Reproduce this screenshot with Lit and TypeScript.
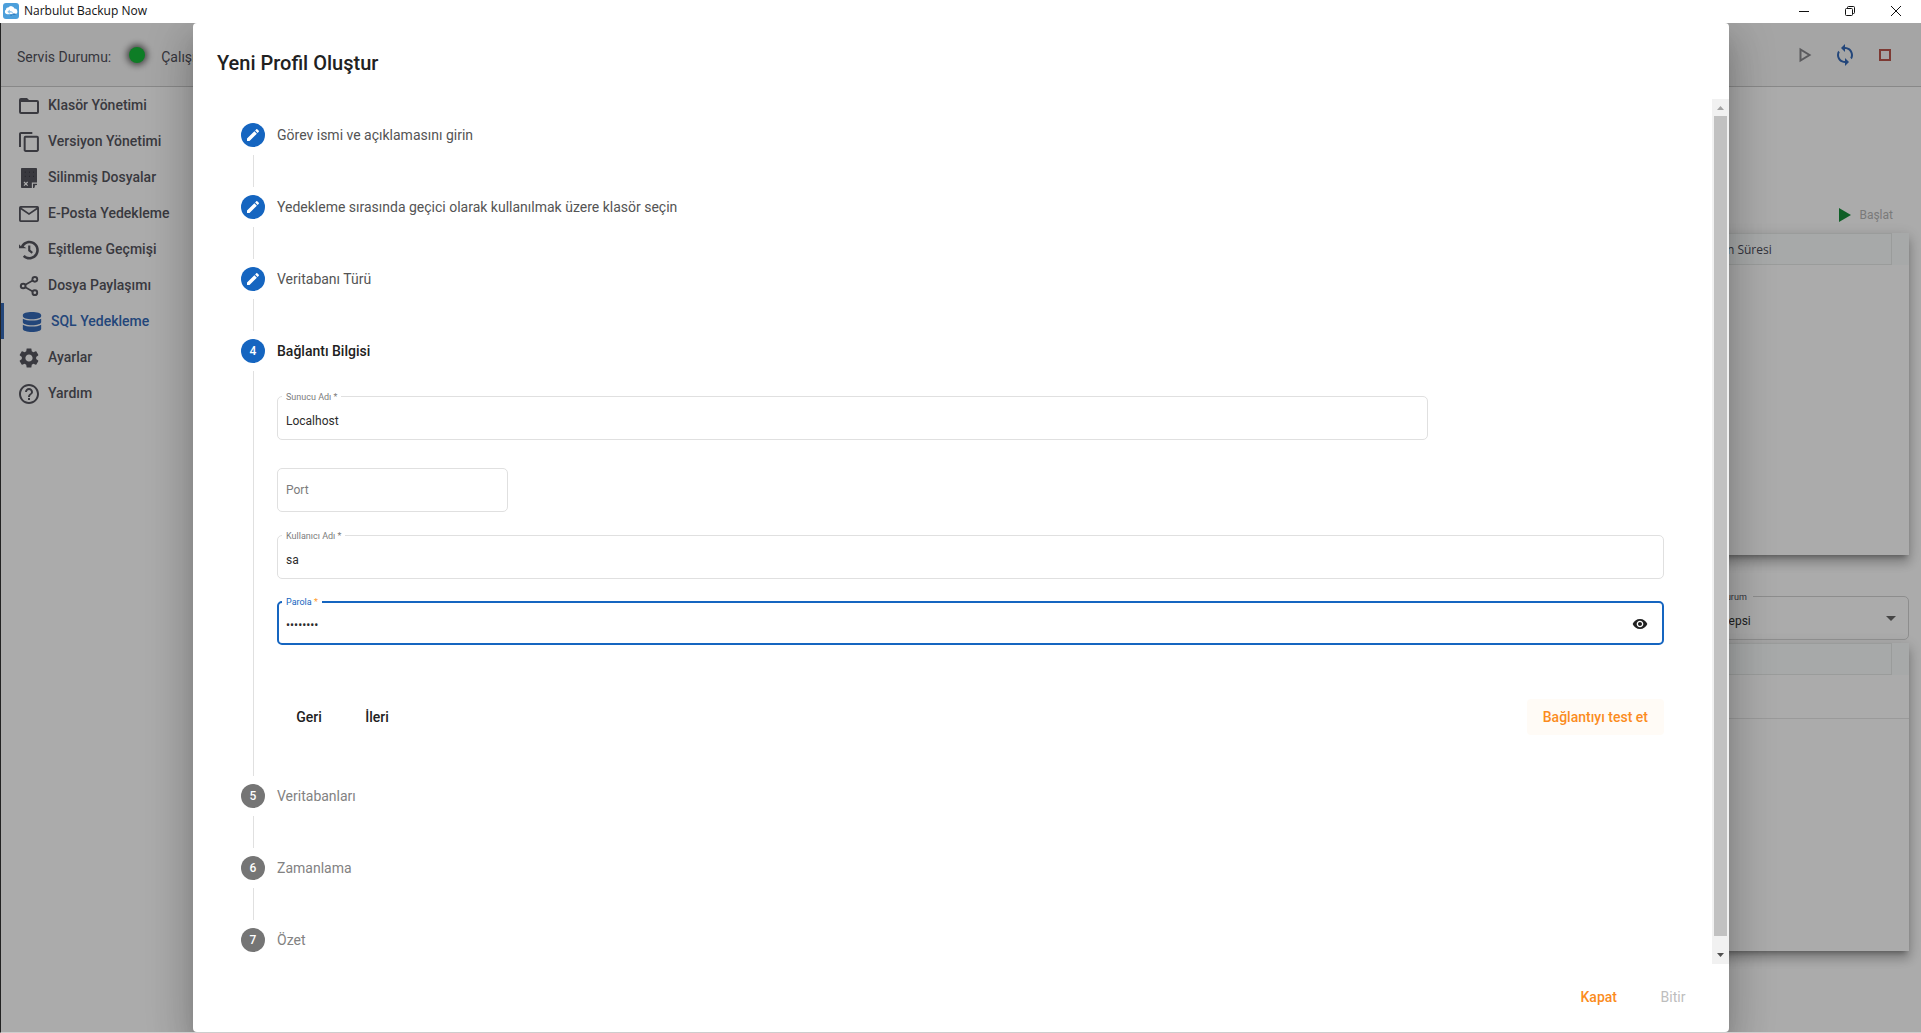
import { LitElement, html, css, svg, nothing, type TemplateResult } from "lit";
import { customElement, property, state } from "lit/decorators.js";
import { classMap } from "lit/directives/class-map.js";

const icons: Record<string, TemplateResult> = {
  folder: svg`<path fill-rule="evenodd" d="M2.400 2.400h7.200L12 4.800h9.600A2.400 2.400 0 0124 7.200v12a2.400 2.400 0 01-2.400 2.400H2.400A2.400 2.400 0 010 19.200V4.800a2.400 2.400 0 012.400-2.400zM2.400 7.200v12h19.200v-12z"/>`,
  copy: svg`<path d="M16 0H2.500C1.100 0 0 1 0 2.300V18h2.400V2.400H16V0zM21.500 4.500H8A2.300 2.300 0 005.600 6.800v14.900C5.600 23 6.600 24 8 24h13.500c1.300 0 2.400-1 2.400-2.300V6.800a2.300 2.300 0 00-2.400-2.300zm0 17.100H8V6.900h13.500v14.700z"/>`,
  deleted: svg`<path d="M3.600 0h16.800c.7 0 1.200.5 1.200 1.200v16.300h-6.200V24H3.600c-.7 0-1.200-.5-1.200-1.200V1.200C2.400.5 2.900 0 3.600 0z"/><path d="M16.800 24v-5h4.800v1.500l-2.500.2-.2 2.300-1 1z"/><path d="M6 16.800l4.400 4.400M10.400 16.800L6 21.200" stroke="#fdfdfd" stroke-width="1.500"/><path d="M7 5h.8M12 5h.8M17 5h.8M7 10h.8M12 10h.8M17 10h.8" stroke="#1c1c24" stroke-width="1"/>`,
  mail: svg`<path fill-rule="evenodd" d="M2 2.400h20a2 2 0 012 2v15.200a2 2 0 01-2 2H2a2 2 0 01-2-2V4.400a2 2 0 012-2zm.9 2.200L12 10.800l9.100-6.200zM2.200 6.600v12.800h19.600V6.600L12 13.200z"/>`,
  history: svg`<path d="M12.500 1C7.900 1 4 3.800 2.300 7.600L0 5.200V0v10h9L5.700 7.900C7 5.500 9.500 4 12.500 4c4.500 0 8.200 3.600 8.200 8.100s-3.700 8.200-8.200 8.200c-2.300 0-4.300-.9-5.800-2.400l-2.100 2.100c2 2.100 4.800 3.400 7.900 3.400 6.200 0 11.300-5 11.300-11.300S18.700 1 12.500 1zM11 6.500v6.700l4.300 3.200 1.400-2.100-3.100-2.500V6.500z"/>`,
  share: svg`<path d="M17 5L6 11.500v1L17 19" fill="none" stroke="currentColor" stroke-width="2"/><circle cx="19" cy="4" r="4"/><circle cx="5" cy="12" r="4"/><circle cx="19" cy="20" r="4"/><g fill="#fdfdfd"><circle cx="19" cy="4" r="1.600"/><circle cx="5" cy="12" r="1.600"/><circle cx="19" cy="20" r="1.600"/></g>`,
  database: svg`<path d="M23 3.600v1.600c0 2-4.900 3.600-11 3.600S1 7.200 1 5.200V3.600C1 1.600 5.900 0 12 0s11 1.600 11 3.600zM23 8v4.300c0 2-4.900 3.600-11 3.600S1 14.300 1 12.300V8c2.400 1.500 6.700 2.200 11 2.200S20.600 9.500 23 8zm0 7.200v5.200c0 2-4.900 3.600-11 3.600S1 22.400 1 20.400v-5.200c2.400 1.600 6.700 2.300 11 2.300s8.600-.7 11-2.300z"/>`,
  gear: svg`<path transform="translate(-2.400 -2.400) scale(1.200)" d="M19.140 12.940c.04-.3.060-.61.060-.94s-.02-.64-.07-.94l2.030-1.580c.18-.14.230-.41.120-.61l-1.920-3.320c-.12-.22-.37-.29-.59-.22l-2.390.96c-.5-.38-1.030-.7-1.620-.94l-.36-2.540c-.04-.24-.24-.41-.48-.41h-3.840c-.24 0-.43.170-.47.410l-.36 2.540c-.59.240-1.130.57-1.620.94l-2.390-.96c-.22-.08-.47 0-.59.220L2.740 8.870c-.12.210-.08.470.120.610l2.030 1.580c-.05.3-.09.630-.09.940s.02.640.07.940l-2.030 1.580c-.18.140-.23.410-.12.610l1.920 3.320c.12.220.37.290.59.220l2.390-.96c.5.380 1.030.7 1.620.940l.36 2.540c.05.240.24.410.48.410h3.840c.24 0 .44-.17.470-.41l.36-2.540c.59-.24 1.130-.56 1.620-.94l2.390.96c.22.080.47 0 .59-.22l1.920-3.320c.12-.22.070-.47-.12-.61l-2.010-1.580zM12 15.600c-1.980 0-3.600-1.620-3.600-3.600s1.620-3.600 3.600-3.600 3.600 1.620 3.600 3.600-1.620 3.600-3.600 3.600z"/>`,
  help: svg`<path transform="translate(-2.400 -2.400) scale(1.200)" d="M11 18h2v-2h-2v2zm1-16C6.480 2 2 6.480 2 12s4.480 10 10 10 10-4.480 10-10S17.520 2 12 2zm0 18c-4.410 0-8-3.590-8-8s3.590-8 8-8 8 3.590 8 8-3.590 8-8 8zm0-14c-2.210 0-4 1.790-4 4h2c0-1.100.9-2 2-2s2 .9 2 2c0 2-3 1.750-3 5h2c0-2.250 3-2.500 3-5 0-2.210-1.790-4-4-4z"/>`,
  pencil: svg`<path d="M3 17.250V21h3.750L17.810 9.940l-3.750-3.750L3 17.250zM20.710 7.040c.39-.39.390-1.020 0-1.410l-2.340-2.340c-.39-.39-1.020-.39-1.410 0l-1.830 1.830 3.750 3.750 1.830-1.830z"/>`,
  eye: svg`<path d="M12 4.500C7 4.500 2.730 7.610 1 12c1.730 4.390 6 7.500 11 7.500s9.270-3.110 11-7.500c-1.730-4.390-6-7.500-11-7.500zM12 17c-2.760 0-5-2.240-5-5s2.240-5 5-5 5 2.240 5 5-2.240 5-5 5zm0-8c-1.660 0-3 1.340-3 3s1.340 3 3 3 3-1.340 3-3-1.340-3-3-3z"/>`,
  sync: svg`<path d="M12 4V1L8 5l4 4V6c3.310 0 6 2.690 6 6 0 1.010-.25 1.970-.7 2.800l1.460 1.460C19.540 15.030 20 13.570 20 12c0-4.420-3.580-8-8-8zm0 14c-3.310 0-6-2.690-6-6 0-1.010.25-1.970.7-2.800L5.240 7.740C4.460 8.970 4 10.430 4 12c0 4.420 3.580 8 8 8v3l4-4-4-4v3z"/>`,
};

const icon = (name: string, cls = "icon") =>
  html`<svg class=${cls} viewBox="0 0 24 24" fill="currentColor" aria-hidden="true">${icons[name]}</svg>`;

@customElement("title-bar")
class TitleBar extends LitElement {
  static styles = css`
    :host { display: flex; align-items: center; height: 23px; box-sizing: border-box; padding: 0 2px 2px 0; flex: none; background: #fff; color: #111;
      font: 12px/16px "Segoe UI", "Open Sans", sans-serif; }
    .logo { width: 16px; height: 16px; margin: 0 5px 0 3px; }
    .name { flex: 1; }
    .win { width: 46px; height: 21px; padding: 0; border: 0; background: none; display: grid; place-items: center; color: #111; }
    .win svg { width: 10px; height: 10px; display: block; }
  `;
  render() {
    return html`
      <svg class="logo" viewBox="0 0 16 16" aria-hidden="true">
        <rect width="16" height="16" rx="3" fill="#4c9fdb" />
        <path d="M4.500 11.200A2.500 2.500 0 013 6.600a2 2 0 012.300-2A3.400 3.400 0 0111.400 5.600a2.800 2.800 0 01.9 5.500z" fill="#fff" />
        <path d="M4.300 8.800l2.500-2.400v1.500c2 0 3.200.8 3.400 2.700-.9-.9-1.900-1.100-3.400-1v1.500z" fill="#8cc4ec" />
        <path d="M7.500 11.500h1.200v1.200H7.500zM9.500 10.500h3v1.200h-3z" fill="#2672b8" />
      </svg>
      <span class="name">Narbulut Backup Now</span>
      <button class="win" aria-label="Simge durumuna küçült"><svg viewBox="0 0 10 10"><path d="M0 5.500h10" stroke="currentColor" /></svg></button>
      <button class="win" aria-label="Önceki boyut"><svg viewBox="0 0 10 10" fill="none" stroke="currentColor"><rect x=".5" y="2.500" width="7" height="7" rx="1" /><path d="M2.500 2V1.500a1 1 0 011-1h5a1 1 0 011 1v5a1 1 0 01-1 1H8" /></svg></button>
      <button class="win" aria-label="Kapat"><svg viewBox="0 0 10 10"><path d="M0 0l10 10M10 0L0 10" stroke="currentColor" /></svg></button>
    `;
  }
}

const menu: [string, string][] = [
  ["folder", "Klasör Yönetimi"],
  ["copy", "Versiyon Yönetimi"],
  ["deleted", "Silinmiş Dosyalar"],
  ["mail", "E-Posta Yedekleme"],
  ["history", "Eşitleme Geçmişi"],
  ["share", "Dosya Paylaşımı"],
  ["database", "SQL Yedekleme"],
  ["gear", "Ayarlar"],
  ["help", "Yardım"],
];

@customElement("backup-shell")
class BackupShell extends LitElement {
  static styles = css`
    :host { display: flex; flex-direction: column; height: 100%;
      background: #fdfdfd; color: #50505a; font: 14px/20px Roboto, sans-serif; }
    .top { display: flex; align-items: center; padding: 4px 24px 0 16px; height: 59px; background: #f4f4f4; border-bottom: 1px solid #c9c9c9; }
    .status { display: flex; align-items: center; width: 177px; overflow: hidden; height: 56px; white-space: nowrap; }
    .led { width: 16px; height: 16px; flex: none; border-radius: 50%; background: #16b838; box-shadow: 0 0 7px 2px #555; margin: 0 16px 4px 18px; }
    .tools { margin-left: auto; display: flex; align-items: center; gap: 16px; padding-bottom: 4px; }
    .tool { width: 24px; height: 24px; padding: 0; border: 0; background: none; display: grid; place-items: center; }
    .tool svg { display: block; width: 16px; height: 16px; }
    .tool .sync { width: 24px; height: 24px; color: #3468b4; }
    .body { flex: 1; display: flex; min-height: 0; }
    nav { width: 220px; flex: none; display: flex; flex-direction: column; }
    .item { display: flex; align-items: center; gap: 9px; height: 36px; padding-left: 18px; color: #55555e; font-weight: 500; text-decoration: none; }
    .item.active { border-left: 3px solid #3468b4; color: #3468b4; }
    .icon { width: 20px; height: 20px; flex: none; margin-top: 2px; }
    main { flex: 1; min-width: 0; display: flex; flex-direction: column; padding: 110px 12px 81px 24px; }
    .actions { display: flex; justify-content: flex-end; height: 36px; flex: none; padding-right: 16px; }
    .start { display: flex; align-items: center; gap: 8px; border: 0; padding: 0; background: none; font: 12px/16px Roboto, sans-serif; color: #b4b4b4; }
    .start svg { width: 12px; height: 14px; }
    .card { background: #fdfdfd; flex: 23 1 0; min-height: 0;
      box-shadow: 0 5px 5px -3px rgba(0,0,0,.3), 0 8px 10px 1px rgba(0,0,0,.16), 0 3px 14px 2px rgba(0,0,0,.12); }
    .card.log { flex-grow: 22; }
    table { width: 100%; border-collapse: separate; border-spacing: 0; table-layout: fixed; }
    th { height: 32px; padding: 2px 0 0 7px; box-sizing: border-box; border: 1px solid #e3e6e5; border-left: 0; background: #f6faf9;
      text-align: left; font: 500 12px/16px "Segoe UI", "Open Sans", sans-serif; color: #4a4a58; }
    .last { width: 189px; }
    .gutter { width: 17px; border-color: transparent; padding: 0; }
    td { height: 44px; box-sizing: border-box; padding: 0; border-bottom: 1px solid #e3e3e3; }
    .filter { display: flex; justify-content: flex-end; padding: 41px 0 3px; flex: none; }
    .select { position: relative; width: 198px; height: 44px; }
    .select label { position: absolute; left: 5px; top: -5px; padding: 0 6px 0 4px; background: #fdfdfd; font-size: 9px; line-height: 12px; color: #50505a; }
    .select select { appearance: none; width: 100%; height: 44px; border: 1px solid #d0d0d0; border-radius: 5px; background: none;
      padding: 6px 8px 0; font: 12px/16px Roboto, sans-serif; color: #333; opacity: 1; }
    .select svg { position: absolute; right: 13px; top: 20px; width: 10px; height: 5px; }
  `;
  render() {
    return html`
      <header class="top">
        <div class="status"><span>Servis Durumu:</span><span class="led"></span><span>Çalışıyor</span></div>
        <div class="tools">
          <button class="tool" aria-label="Başlat"><svg viewBox="0 0 16 16"><path d="M3.500 2.500v11l9-5.500z" fill="none" stroke="#85858a" stroke-width="2" /></svg></button>
          <button class="tool" aria-label="Yenile">${icon("sync", "sync")}</button>
          <button class="tool" aria-label="Durdur"><svg viewBox="0 0 16 16"><rect x="3" y="3" width="10" height="10" fill="none" stroke="#b8564c" stroke-width="2" /></svg></button>
        </div>
      </header>
      <div class="body">
        <nav>
          ${menu.map(([name, text]) => html`
            <a href="#${name}" class=${classMap({ item: true, active: name === "database" })}>${icon(name)}<span>${text}</span></a>`)}
        </nav>
        <main>
          <div class="actions">
            <button class="start" disabled><svg viewBox="0 0 12 14" aria-hidden="true"><path d="M0 0v14l12-7z" fill="#178c3a" /></svg>Başlat</button>
          </div>
          <section class="card"><table><thead><tr><th></th><th class="last">Plan Süresi</th><th class="gutter"></th></tr></thead></table></section>
          <div class="filter">
            <div class="select">
              <select id="status"><option>Hepsi</option></select>
              <label for="status">Durum</label>
              <svg viewBox="0 0 10 5" aria-hidden="true"><path d="M0 0h10L5 5z" fill="#666" /></svg>
            </div>
          </div>
          <section class="card log">
            <table><thead><tr><th></th><th class="last"></th><th class="gutter"></th></tr></thead>
              <tbody><tr><td colspan="3"></td></tr></tbody></table>
          </section>
        </main>
      </div>
    `;
  }
}

@customElement("outline-field")
class OutlineField extends LitElement {
  @property() label = "";
  @property() value = "";
  @property() type = "text";
  @property({ type: Boolean }) required = false;
  @property({ type: Boolean, reflect: true }) active = false;
  @state() private revealed = false;
  static styles = css`
    :host { display: block; position: relative; height: 44px; font-family: Roboto, sans-serif; }
    input { box-sizing: border-box; width: 100%; height: 44px; padding: 5px 8px 0; margin: 0; border: 1px solid #e0e0e0; border-radius: 5px;
      background: none; outline: 0; font: 12px/16px Roboto, sans-serif; color: #2c2c2c; display: block; }
    input::placeholder { color: #7c7c7c; opacity: 1; }
    input.empty { padding-top: 0; }
    :host([active]) input { border: 2px solid #1565c0; padding: 3px 40px 0 7px; }
    label { position: absolute; left: 5px; top: -5px; padding: 0 4px; background: #fff; font-size: 9px; line-height: 12px; color: #7c7c7c; }
    :host([active]) label { color: #1565c0; }
    :host([active]) .star { color: #ff9a2e; }
    .peek { position: absolute; right: 16px; top: 15px; width: 16px; height: 16px; border: 0; padding: 0; background: none; color: #212121; }
    .peek svg { width: 16px; height: 16px; display: block; }
  `;
  render() {
    const type = this.type === "password" && this.revealed ? "text" : this.type;
    return html`
      <input id="f" type=${type} .value=${this.value} class=${this.value ? "" : "empty"}
        aria-label=${this.label} placeholder=${this.value ? nothing : this.label} />
      ${this.value ? html`<label for="f">${this.label}${this.required ? html`<span class="star"> *</span>` : nothing}</label>` : nothing}
      ${this.type === "password" ? html`<button class="peek" aria-label="Parolayı göster" @click=${() => (this.revealed = !this.revealed)}>${icon("eye")}</button>` : nothing}
    `;
  }
}

const steps = [
  "Görev ismi ve açıklamasını girin",
  "Yedekleme sırasında geçici olarak kullanılmak üzere klasör seçin",
  "Veritabanı Türü",
  "Bağlantı Bilgisi",
  "Veritabanları",
  "Zamanlama",
  "Özet",
];

@customElement("profile-dialog")
class ProfileDialog extends LitElement {
  @state() private current = 3;
  static styles = css`
    :host { display: flex; flex-direction: column; width: 80%; background: #fff; border-radius: 4px; overflow: hidden; color: #212121;
      font: 14px/20px Roboto, sans-serif;
      box-shadow: 0 11px 15px -7px rgba(0,0,0,.2), 0 24px 38px 3px rgba(0,0,0,.14), 0 9px 46px 8px rgba(0,0,0,.12); }
    h1 { margin: 24px 24px 20px; font-size: 20px; line-height: 32px; font-weight: 500; flex: none; }
    .scroll { flex: 1; min-height: 0; display: flex; }
    .stepper { flex: 1; min-width: 0; margin: 0; padding: 0 48px; list-style: none; overflow: hidden; }
    .step { position: relative; }
    .step:not(:last-child)::after { content: ""; position: absolute; left: 12px; top: 56px; bottom: -16px; border-left: 1px solid #e0e0e0; }
    .head { display: flex; align-items: center; gap: 12px; width: 100%; height: 72px; border: 0; padding: 0; background: none;
      font: 14px/20px Roboto, sans-serif; color: #828282; text-align: left; }
    .head.done { color: #545454; }
    .head.now { color: #212121; font-weight: 500; }
    .dot { width: 24px; height: 24px; border-radius: 50%; display: grid; place-items: center; background: #757575; color: #fff; font-size: 12px; line-height: 16px; font-weight: 500; }
    .done .dot, .now .dot { background: #1565c0; }
    .dot svg { width: 16px; height: 16px; }
    .content { padding: 9px 0 25px 36px; }
    .content outline-field { margin-bottom: 22px; }
    .content .server { width: 83%; margin-bottom: 28px; }
    .content .port { width: 231px; margin-bottom: 23px; }
    .row { display: flex; gap: 4px; padding-top: 32px; }
    .btn { height: 36px; min-width: 64px; padding: 0 16px; border: 0; border-radius: 4px; background: none; font: 500 14px/20px Roboto, sans-serif; color: #212121; }
    .accent { color: #fb8c1e; }
    .test { margin-left: auto; background: #fffbf6; }
    .btn:disabled { color: #bdbdbd; font-weight: 400; }
    .bar { width: 17px; flex: none; background: #f1f1f1; display: flex; flex-direction: column; align-items: center; }
    .bar svg { width: 17px; height: 17px; display: block; }
    .thumb { width: 13px; flex: 1; background: #c1c1c1; margin-bottom: 11px; }
    footer { display: flex; justify-content: flex-end; align-items: center; gap: 8px; height: 68px; box-sizing: border-box; padding: 0 24px 2px; flex: none; }
  `;
  render() {
    return html`
      <h1>Yeni Profil Oluştur</h1>
      <div class="scroll">
        <ol class="stepper">
          ${steps.map((text, i) => html`
            <li class="step">
              <button class=${classMap({ head: true, done: i < this.current, now: i === this.current })}>
                <span class="dot">${i < this.current ? icon("pencil") : i + 1}</span><span>${text}</span>
              </button>
              ${i === this.current ? this.connection() : nothing}
            </li>`)}
        </ol>
        <div class="bar" aria-hidden="true">
          <svg viewBox="0 0 17 17"><path d="M5 11h7L8.500 7z" fill="#a3a3a3" /></svg>
          <div class="thumb"></div>
          <svg viewBox="0 0 17 17"><path d="M5 6h7l-3.500 4z" fill="#505050" /></svg>
        </div>
      </div>
      <footer>
        <button class="btn accent">Kapat</button>
        <button class="btn" disabled>Bitir</button>
      </footer>
    `;
  }
  private connection() {
    return html`
      <div class="content">
        <outline-field class="server" label="Sunucu Adı" value="Localhost" required></outline-field>
        <outline-field class="port" label="Port"></outline-field>
        <outline-field label="Kullanıcı Adı" value="sa" required></outline-field>
        <outline-field label="Parola" type="password" value="12345678" required active></outline-field>
        <div class="row">
          <button class="btn">Geri</button>
          <button class="btn">İleri</button>
          <button class="btn accent test">Bağlantıyı test et</button>
        </div>
      </div>`;
  }
}

@customElement("app-root")
class AppRoot extends LitElement {
  static styles = css`
    :host { display: flex; flex-direction: column; height: 100vh; background: #fff; }
    .stage { position: relative; flex: 1; min-height: 0; overflow: hidden; border-left: 1px solid #222; border-bottom: 1px solid #cdcdcd; }
    .overlay { position: absolute; inset: 0; display: flex; justify-content: center; background: rgba(0,0,0,.32); }
  `;
  render() {
    return html`
      <title-bar></title-bar>
      <div class="stage">
        <backup-shell></backup-shell>
        <div class="overlay"><profile-dialog role="dialog" aria-label="Yeni Profil Oluştur"></profile-dialog></div>
      </div>
    `;
  }
}
